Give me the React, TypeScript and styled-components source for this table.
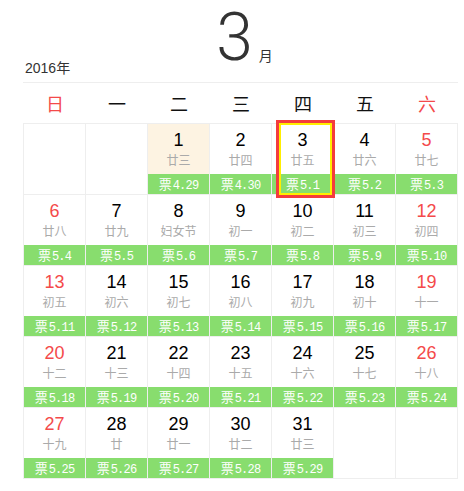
import React from "react";
import styled, { createGlobalStyle } from "styled-components";

const Global = createGlobalStyle`
  html, body { margin: 0; padding: 0; background: #fff; }
  body { font-family: "Liberation Sans", "Noto Sans CJK SC", sans-serif; color: #333; }
`;

const Wrap = styled.div`
  width: 435px;
  margin-left: 23px;
`;

const Header = styled.div`
  display: flex;
  align-items: flex-start;
  height: 82px;
  border-bottom: 1px solid #eee;
`;

const Year = styled.div`
  margin-top: 61px;
  margin-left: 2px;
  font-size: 14px;
  line-height: 14px;
  color: #333;
  font-family: "Liberation Sans", "Noto Sans CJK SC", sans-serif;
`;

const MonthNum = styled.div`
  margin-top: 5px;
  margin-left: 146px;
  font-family: Roboto, "Liberation Sans", sans-serif;
  font-weight: 300;
  font-size: 66px;
  line-height: 66px;
  color: #333;
`;

const MonthUnit = styled.div`
  margin-top: 48px;
  margin-left: 6px;
  font-family: "Noto Sans CJK SC", sans-serif;
  font-size: 14px;
  line-height: 14px;
  color: #333;
`;

const WeekRow = styled.div`
  display: grid;
  grid-template-columns: repeat(7, 62px);
  padding-left: 1px;
  height: 40px;
`;

const WeekDay = styled.div<{ $weekend?: boolean }>`
  display: flex;
  align-items: center;
  justify-content: center;
  font-family: "Noto Sans CJK SC", sans-serif;
  font-size: 18px;
  color: ${(p) => (p.$weekend ? "#f44a4a" : "#111")};
`;

const Grid = styled.div`
  display: grid;
  grid-template-columns: repeat(7, 62px);
  grid-auto-rows: 71px;
  border-left: 1px solid #eee;
  border-top: 1px solid #eee;
  width: 434px;
`;

const Cell = styled.div<{ $highlight?: boolean }>`
  position: relative;
  box-sizing: border-box;
  display: flex;
  flex-direction: column;
  align-items: center;
  border-right: 1px solid #eee;
  border-bottom: 1px solid #eee;
  background: ${(p) => (p.$highlight ? "#fdf3e2" : "#fff")};
`;

const DayNum = styled.div<{ $weekend?: boolean }>`
  margin-top: 7px;
  font-family: "Liberation Sans", sans-serif;
  font-size: 18px;
  line-height: 18px;
  color: ${(p) => (p.$weekend ? "#f44a4a" : "#000")};
`;

const Lunar = styled.div`
  margin-top: 5px;
  font-family: "Noto Sans CJK SC", sans-serif;
  font-size: 12px;
  line-height: 12px;
  color: #aaa;
`;

const Ticket = styled.div`
  margin-top: auto;
  align-self: stretch;
  height: 20px;
  line-height: 20px;
  background: #88dd6e;
  color: #fff;
  text-align: center;
  font-size: 12px;
  white-space: nowrap;
`;

const TicketLabel = styled.span`
  font-family: "Noto Sans CJK SC", sans-serif;
  font-size: 13px;
`;

const TicketDate = styled.span`
  font-family: "Liberation Mono", monospace;
  font-size: 12px;
  letter-spacing: -0.8px;
  margin-left: 1px;
`;

const TodayMark = styled.div`
  position: absolute;
  left: 4px;
  top: -4px;
  width: 59px;
  height: 78px;
  box-sizing: border-box;
  border: 3px solid #f43c3c;
  box-shadow: inset 0 0 0 2px #ffee00;
  pointer-events: none;
  z-index: 2;
`;

const lunar = [
  "廿三", "廿四", "廿五", "廿六", "廿七", "廿八", "廿九", "妇女节", "初一", "初二",
  "初三", "初四", "初五", "初六", "初七", "初八", "初九", "初十", "十一", "十二",
  "十三", "十四", "十五", "十六", "十七", "十八", "十九", "廿", "廿一", "廿二", "廿三",
];

const weekdays = ["日", "一", "二", "三", "四", "五", "六"];

function ticketOf(d: number) {
  if (d === 1) return "4.29";
  if (d === 2) return "4.30";
  return `5.${d - 2}`;
}

export default function App() {
  const startOffset = 2;
  const cells: (number | null)[] = [];
  for (let i = 0; i < startOffset; i++) cells.push(null);
  for (let d = 1; d <= 31; d++) cells.push(d);
  while (cells.length % 7 !== 0) cells.push(null);

  return (
    <>
      <Global />
      <Wrap>
        <Header>
          <Year>2016年</Year>
          <MonthNum>3</MonthNum>
          <MonthUnit>月</MonthUnit>
        </Header>
        <WeekRow>
          {weekdays.map((w, i) => (
            <WeekDay key={w} $weekend={i === 0 || i === 6}>
              {w}
            </WeekDay>
          ))}
        </WeekRow>
        <Grid>
          {cells.map((d, i) => {
            if (d === null) return <Cell key={i} />;
            const col = i % 7;
            return (
              <Cell key={i} $highlight={d === 1}>
                <DayNum $weekend={col === 0 || col === 6}>{d}</DayNum>
                <Lunar>{lunar[d - 1]}</Lunar>
                <Ticket>
                  <TicketLabel>票</TicketLabel>
                  <TicketDate>{ticketOf(d)}</TicketDate>
                </Ticket>
                {d === 3 && <TodayMark />}
              </Cell>
            );
          })}
        </Grid>
      </Wrap>
    </>
  );
}
